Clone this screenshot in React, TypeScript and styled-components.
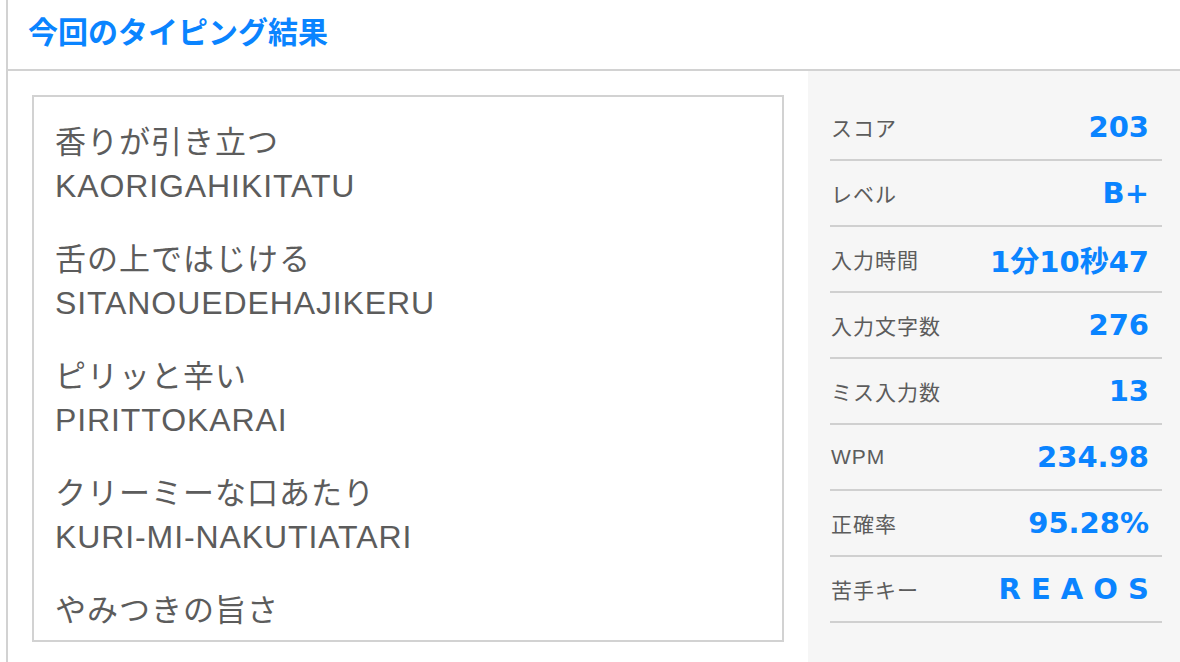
import React from "react";
import styled, { createGlobalStyle } from "styled-components";

const Global = createGlobalStyle`
  html, body { margin: 0; padding: 0; background: #ffffff; }
  body {
    font-family: "Liberation Sans", "Noto Sans CJK JP", sans-serif;
    color: #5c5c5c;
  }
  * { box-sizing: border-box; }
`;

const Frame = styled.div`
  margin-left: 6px;
  height: 662px;
  border-left: 2px solid #d2d2d2;
  display: flex;
  flex-direction: column;
  overflow: hidden;
`;

const Header = styled.header`
  height: 71px;
  flex: none;
  border-bottom: 2px solid #d2d2d2;
  display: flex;
  align-items: center;
  padding: 0 0 9px 20px;
`;

const Title = styled.h1`
  margin: 0;
  font-family: "Noto Sans CJK JP", sans-serif;
  font-weight: 700;
  font-size: 30px;
  line-height: 1;
  color: #0a84ff;
`;

const Body = styled.div`
  flex: 1;
  display: flex;
  min-height: 0;
`;

const Left = styled.section`
  width: 800px;
  flex: none;
  padding: 24px 24px 0 24px;
`;

const LyricBox = styled.div`
  height: 547px;
  border: 2px solid #d2d2d2;
  padding: 20px 20px 0 21px;
  overflow: hidden;
  display: flex;
  flex-direction: column;
  gap: 25px;
`;

const Entry = styled.div`
  display: flex;
  flex-direction: column;
`;

const Kana = styled.div`
  font-family: "Noto Sans CJK JP", sans-serif;
  font-size: 31px;
  letter-spacing: 1px;
  line-height: 46px;
  height: 46px;
  color: #5c5c5c;
`;

const Roma = styled.div`
  font-family: "Liberation Sans", sans-serif;
  font-size: 32px;
  letter-spacing: 0.9px;
  line-height: 46px;
  height: 46px;
  color: #5c5c5c;
`;

const Panel = styled.aside`
  flex: 1;
  background: #f6f6f6;
  padding: 24px 18px 0 22px;
`;

const Row = styled.div`
  height: 66px;
  border-bottom: 2px solid #d0d0d0;
  display: flex;
  align-items: center;
  justify-content: space-between;
  padding: 0 13px 0 1px;
`;

const Label = styled.span`
  font-family: "Liberation Sans", "Noto Sans CJK JP", sans-serif;
  font-size: 21px;
  letter-spacing: 1px;
  color: #5c5c5c;
`;

const Value = styled.span`
  font-family: "DejaVu Sans", "Noto Sans CJK JP", sans-serif;
  font-weight: 700;
  font-size: 29px;
  color: #0a84ff;
  white-space: pre;
`;

const lyrics: { kana: string; roma?: string }[] = [
  { kana: "香りが引き立つ", roma: "KAORIGAHIKITATU" },
  { kana: "舌の上ではじける", roma: "SITANOUEDEHAJIKERU" },
  { kana: "ピリッと辛い", roma: "PIRITTOKARAI" },
  { kana: "クリーミーな口あたり", roma: "KURI-MI-NAKUTIATARI" },
  { kana: "やみつきの旨さ" },
];

const stats: [string, string][] = [
  ["スコア", "203"],
  ["レベル", "B+"],
  ["入力時間", "1分10秒47"],
  ["入力文字数", "276"],
  ["ミス入力数", "13"],
  ["WPM", "234.98"],
  ["正確率", "95.28%"],
  ["苦手キー", "R E A O S"],
];

export default function App() {
  return (
    <>
      <Global />
      <Frame>
        <Header>
          <Title>今回のタイピング結果</Title>
        </Header>
        <Body>
          <Left>
            <LyricBox>
              {lyrics.map((l) => (
                <Entry key={l.kana}>
                  <Kana>{l.kana}</Kana>
                  {l.roma && <Roma>{l.roma}</Roma>}
                </Entry>
              ))}
            </LyricBox>
          </Left>
          <Panel>
            {stats.map(([k, v]) => (
              <Row key={k}>
                <Label>{k}</Label>
                <Value>{v}</Value>
              </Row>
            ))}
          </Panel>
        </Body>
      </Frame>
    </>
  );
}
